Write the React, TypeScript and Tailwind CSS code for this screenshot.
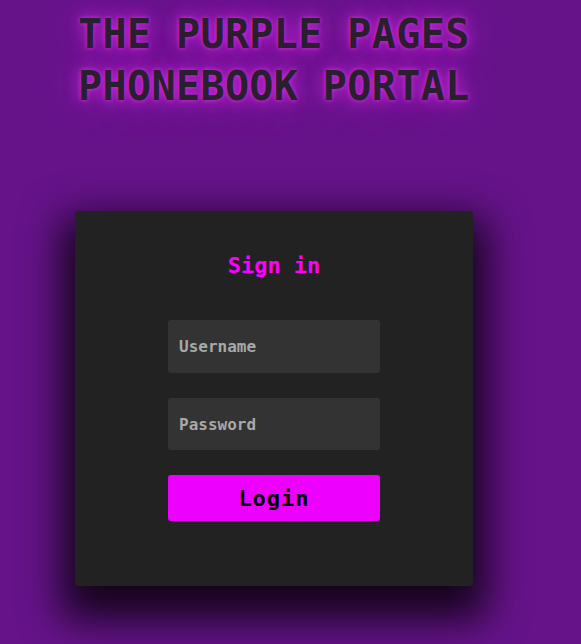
import React from 'react';

export default function App() {
  const mono = { fontFamily: '"DejaVu Sans Mono", "Liberation Mono", monospace' };

  return (
    <div className="min-h-[644px] w-full bg-[#66138a] overflow-hidden" style={mono}>
      {/* Header */}
      <h1 className="pt-2 pl-[78px] text-[40px] leading-[52px] tracking-[0.4px] font-bold text-[#2a1f2e] [text-shadow:0_0_4px_#d030e0,0_0_16px_#c828d8,0_0_34px_#b020c8]">
        THE PURPLE PAGES
        <br />
        PHONEBOOK PORTAL
      </h1>

      {/* Sign in card */}
      <div className="ml-[75px] mt-[99px] w-[398px] h-[375px] bg-[#222222] rounded-[3px] shadow-[0_20px_40px_14px_rgba(0,0,0,0.8)] flex flex-col items-center">
        <h2 className="mt-[42px] text-[22px] leading-[26px] font-bold text-[#ff00ff]">Sign in</h2>

        <form className="mt-[41px] flex flex-col gap-[25px] w-[212px]" onSubmit={(e) => e.preventDefault()}>
          <input
            type="text"
            placeholder="Username"
            className="h-[53px] w-full rounded-[3px] bg-[#333333] px-[11px] text-[16px] font-bold text-[#a8a8a8] placeholder:text-[#a8a8a8] outline-none"
            style={mono}
          />
          <input
            type="password"
            placeholder="Password"
            className="h-[52px] w-full rounded-[3px] bg-[#333333] px-[11px] text-[16px] font-bold text-[#a8a8a8] placeholder:text-[#a8a8a8] outline-none"
            style={mono}
          />
          <button
            type="submit"
            className="h-[46px] w-full rounded-[3px] bg-[#ee00ff] text-[22px] font-bold tracking-[1px] text-black"
            style={mono}
          >
            Login
          </button>
        </form>
      </div>
    </div>
  );
}
